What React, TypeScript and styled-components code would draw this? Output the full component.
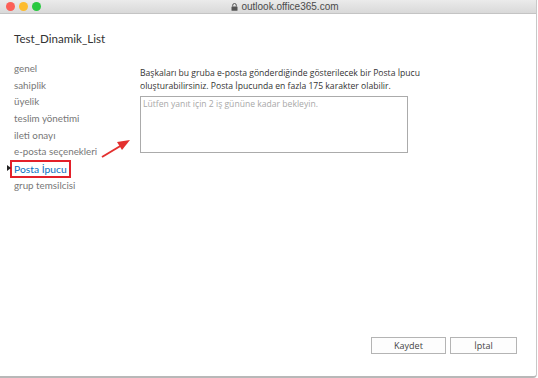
import styled, { createGlobalStyle } from 'styled-components'

const GlobalStyle = createGlobalStyle`
  html, body {
    margin: 0;
    padding: 0;
    background: #ffffff;
  }
  body {
    font-family: "Open Sans", "Noto Sans", sans-serif;
  }
`

const StyledWindow = styled.div`
  width: 536px;
  height: 376px;
  display: flex;
  flex-direction: column;
  background: #ffffff;
  border-right: 1px solid #c8c8c8;
  border-bottom: 2px solid #b8b8b8;
  border-bottom-right-radius: 4px;
  overflow: hidden;
`

const StyledTitleBar = styled.div`
  position: relative;
  height: 13px;
  flex-shrink: 0;
  display: flex;
  align-items: center;
  padding-left: 6px;
  gap: 4px;
  background: linear-gradient(#ebebeb, #d9d9d9);
  border-bottom: 1px solid #c4c4c4;
`

const StyledLight = styled.span<{ $color: string }>`
  width: 9px;
  height: 9px;
  border-radius: 50%;
  background: ${(p) => p.$color};
`

const StyledAddress = styled.div`
  position: absolute;
  left: 0;
  right: 0;
  top: 0;
  bottom: 0;
  display: flex;
  align-items: center;
  justify-content: center;
  gap: 3px;
  padding-left: 34px;
  font-family: "Liberation Sans", Arial, sans-serif;
  font-size: 10px;
  color: #4a4a4a;
`

const StyledBody = styled.div`
  flex: 1;
  display: flex;
  flex-direction: column;
  padding: 17px 18px 22px 14px;
`

const StyledHeading = styled.h1`
  margin: 0 0 13px 0;
  font-family: Lato, "Open Sans", sans-serif;
  font-size: 11.6px;
  font-weight: 400;
  color: #333333;
  line-height: 16px;
`

const StyledMain = styled.div`
  flex: 1;
  display: flex;
`

const StyledNav = styled.ul`
  position: relative;
  list-style: none;
  margin: 0;
  padding: 0;
  width: 126px;
  flex-shrink: 0;
  font-family: Lato, "Open Sans", sans-serif;
`

const StyledNavItem = styled.li<{ $active?: boolean }>`
  position: relative;
  height: 16.7px;
  line-height: 16px;
  font-size: ${(p) => (p.$active ? '10.3px' : '9.8px')};
  color: ${(p) => (p.$active ? '#0a6fc2' : '#777777')};
  white-space: nowrap;
`

const StyledHighlight = styled.span`
  display: inline-block;
  margin-left: -4px;
  padding: 0 2px 0 2px;
  border: 2px solid #e3202a;
  line-height: 14px;
`

const StyledMarker = styled.span`
  position: absolute;
  left: -7px;
  top: 5px;
  width: 0;
  height: 0;
  border-top: 3px solid transparent;
  border-bottom: 3px solid transparent;
  border-left: 4px solid #222222;
`

const StyledArrow = styled.svg`
  position: absolute;
  left: 73px;
  top: 74px;
`

const StyledContent = styled.div`
  flex: 1;
  display: flex;
  flex-direction: column;
  padding-top: 7px;
`

const StyledDescription = styled.p`
  margin: 0 0 3px 0;
  font-size: 8.6px;
  line-height: 13px;
  color: #333333;
`

const StyledTextArea = styled.div`
  width: 268px;
  height: 57px;
  box-sizing: border-box;
  border: 1px solid #ababab;
  padding: 1px 2px;
  font-size: 8.6px;
  line-height: 12px;
  color: #a8a8a8;
`

const StyledFooter = styled.div`
  display: flex;
  justify-content: flex-end;
  gap: 4px;
  padding-right: 1px;
`

const StyledButton = styled.button<{ $width: number }>`
  width: ${(p) => p.$width}px;
  height: 17px;
  padding: 0;
  font-family: inherit;
  font-size: 9px;
  color: #444444;
  background: #fdfdfd;
  border: 1px solid #b4b4b4;
`

const navItems = [
  'genel',
  'sahiplik',
  'üyelik',
  'teslim yönetimi',
  'ileti onayı',
  'e-posta seçenekleri',
  'Posta İpucu',
  'grup temsilcisi',
]

export default function App() {
  return (
    <>
      <GlobalStyle />
      <StyledWindow>
        <StyledTitleBar>
          <StyledLight $color="#fc5f57" />
          <StyledLight $color="#fdbc2e" />
          <StyledLight $color="#29c840" />
          <StyledAddress>
            <svg width="7" height="8" viewBox="0 0 7 8">
              <path d="M1.7 3.5V2.3a1.8 1.8 0 0 1 3.6 0v1.2" fill="none" stroke="#555" strokeWidth="1" />
              <rect x="0.5" y="3.4" width="6" height="4.4" rx="0.6" fill="#555" />
            </svg>
            outlook.office365.com
          </StyledAddress>
        </StyledTitleBar>
        <StyledBody>
          <StyledHeading>Test_Dinamik_List</StyledHeading>
          <StyledMain>
            <StyledNav>
              {navItems.map((item) =>
                item === 'Posta İpucu' ? (
                  <StyledNavItem key={item} $active>
                    <StyledMarker />
                    <StyledHighlight>{item}</StyledHighlight>
                  </StyledNavItem>
                ) : (
                  <StyledNavItem key={item}>{item}</StyledNavItem>
                )
              )}
              <StyledArrow width="46" height="24" viewBox="0 0 46 24">
                <line x1="15" y1="23" x2="35" y2="11" stroke="#e3302f" strokeWidth="2" />
                <polygon points="43,6 30,8 35,16" fill="#e3302f" />
              </StyledArrow>
            </StyledNav>
            <StyledContent>
              <StyledDescription>
                Başkaları bu gruba e-posta gönderdiğinde gösterilecek bir Posta İpucu
                <br />
                oluşturabilirsiniz. Posta İpucunda en fazla 175 karakter olabilir.
              </StyledDescription>
              <StyledTextArea>Lütfen yanıt için 2 iş gününe kadar bekleyin.</StyledTextArea>
            </StyledContent>
          </StyledMain>
          <StyledFooter>
            <StyledButton $width={75}>Kaydet</StyledButton>
            <StyledButton $width={67}>İptal</StyledButton>
          </StyledFooter>
        </StyledBody>
      </StyledWindow>
    </>
  )
}
